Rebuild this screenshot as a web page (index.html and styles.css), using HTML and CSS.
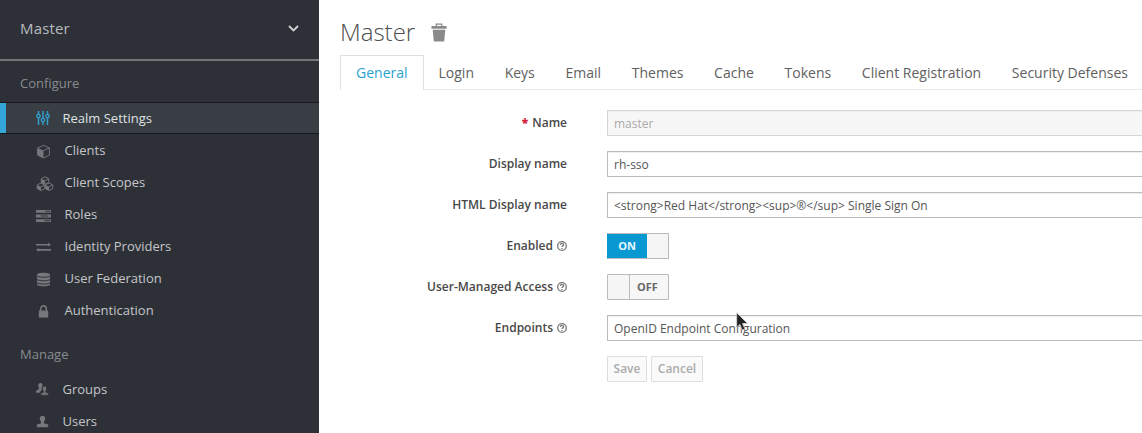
FILE: index.html
```html
<!DOCTYPE html>
<html lang="en">
<head>
<meta charset="utf-8">
<title>Master</title>
<link rel="stylesheet" href="styles.css">
</head>
<body>
<div class="app">
  <aside class="sidebar">
    <div class="realm"><span>Master</span>
      <svg class="chevron" width="11" height="7" viewBox="0 0 11 7"><path d="M1 1l4.5 4.4L10 1" fill="none" stroke="currentColor" stroke-width="1.8"/></svg>
    </div>
    <h2 class="section">Configure</h2>
    <nav class="menu">
      <a class="item active"><svg class="icon" viewBox="0 0 14 14"><path d="M2.500 0v3M2.500 7v7M7 0v7M7 11v3M11.500 0v3M11.500 7v7" stroke="currentColor" stroke-width="1.500"/><g fill="none" stroke="currentColor" stroke-width="1.300"><circle cx="2.500" cy="5" r="1.700"/><circle cx="7" cy="9" r="1.700"/><circle cx="11.500" cy="5" r="1.700"/></g></svg><span>Realm Settings</span></a>
      <a class="item inner"><svg class="icon" viewBox="0 0 16 16"><path d="M8 1.5l6.3 2.7v7.6L8 15l-6.3-3.2V4.2z" fill="none" stroke="currentColor"/><path d="M1.7 4.2L8 7v8l-6.3-3.2z" fill="currentColor"/><path d="M8 7l6.3-2.8" stroke="currentColor"/></svg><span>Clients</span></a>
      <a class="item inner"><svg class="icon wide" viewBox="0 0 18 16"><g stroke="currentColor" fill="none"><path d="M9 .8l4 2v4l-4 2-4-2v-4zM4.7 7.5l4 2v4l-4 2-4-2v-4zM13.3 7.5l4 2v4l-4 2-4-2v-4zM9 4.8l4-2M4.7 11.5l4-2M13.3 11.5l4-2"/></g><path d="M5 2.8l4 2v4l-4-2zM.7 9.5l4 2v4l-4-2zM9.3 9.5l4 2v4l-4-2z" fill="currentColor"/></svg><span>Client Scopes</span></a>
      <a class="item inner"><svg class="icon" viewBox="0 0 16 16"><path d="M0 2h16v3H0zM0 7h16v3H0zM0 12h16v3H0z" fill="currentColor"/><path d="M10 3.5h5M5 8.5h8M9 13.5h6" stroke="#2b2f36"/></svg><span>Roles</span></a>
      <a class="item inner"><svg class="icon" viewBox="0 0 16 16"><path d="M0 5h14M2 10.500h14" stroke="currentColor" stroke-width="1.700"/><path d="M13 3l3 2-3 2zM3 8.500l-3 2 3 2z" fill="currentColor"/></svg><span>Identity Providers</span></a>
      <a class="item inner"><svg class="icon" viewBox="0 0 16 16"><path d="M1 3c0-3 14-3 14 0v10c0 3-14 3-14 0z" fill="currentColor"/><path d="M1 4.2c2 1.8 12 1.8 14 0M1 8c2 1.8 12 1.8 14 0M1 11.5c2 1.8 12 1.8 14 0" fill="none" stroke="#2b2f36"/></svg><span>User Federation</span></a>
      <a class="item inner"><svg class="icon" viewBox="0 0 16 16"><path d="M3 7h10v7.500H3z" fill="currentColor"/><path d="M5 8V5a3 3 0 0 1 6 0v3" fill="none" stroke="currentColor" stroke-width="1.700"/></svg><span>Authentication</span></a>
    </nav>
    <h2 class="section manage">Manage</h2>
    <nav class="menu">
      <a class="item"><svg class="icon people" viewBox="0 0 16 16"><path d="M5.500 0c3 0 3 4 1.500 5.500v3C5.500 9.500 5 11 5 12H0V9.500l3.500-1.700V5.500C2 4 2.500 0 5.500 0z" fill="currentColor"/><path d="M10.500 4c3 0 2.800 4.500 1.300 6v1.300l3.700 1.400V15H6v-2.300l3.300-1.400V10C7.700 8.500 7.500 4 10.500 4z" fill="currentColor" stroke="#2b2f36" stroke-width=".7"/></svg><span>Groups</span></a>
      <a class="item"><svg class="icon people" viewBox="0 0 16 16"><path d="M8 1c4.200 0 3.700 5.500 1.800 7.300v1.800l5.200 1.700V15H1v-3.200l5.200-1.700V8.300C4.300 6.500 3.800 1 8 1z" fill="currentColor"/></svg><span>Users</span></a>
    </nav>
  </aside>
  <main class="content">
    <header class="heading"><h1>Master</h1>
      <svg class="trash" width="16" height="19" viewBox="0 0 17 20"><path d="M5.500 3V1.200h6V3" fill="none" stroke="currentColor" stroke-width="1.300"/><path d="M.5 3h16v3H.5zM1.800 7h13.400L14 19.500H3z" fill="currentColor"/></svg>
    </header>
    <ul class="tabs">
      <li class="tab current">General</li><li class="tab">Login</li><li class="tab">Keys</li><li class="tab">Email</li><li class="tab">Themes</li><li class="tab">Cache</li><li class="tab">Tokens</li><li class="tab">Client Registration</li><li class="tab">Security Defenses</li>
    </ul>
    <form class="form">
      <div class="row"><label class="label"><b class="required">*</b> Name</label><div class="field disabled">master</div></div>
      <div class="row"><label class="label">Display name</label><div class="field">rh-sso</div></div>
      <div class="row"><label class="label">HTML Display name</label><div class="field">&lt;strong&gt;Red Hat&lt;/strong&gt;&lt;sup&gt;®&lt;/sup&gt; Single Sign On</div></div>
      <div class="row"><label class="label">Enabled <svg class="help" viewBox="0 0 10 10"><circle cx="5" cy="5" r="4.300"/><path d="M3.400 3.900c0-2 3.200-1.800 3.200-.1 0 1.200-1.600 1-1.600 2.200M5 7v1"/></svg></label><div class="switch on"><span class="state">ON</span><span class="knob"></span></div></div>
      <div class="row"><label class="label">User-Managed Access <svg class="help" viewBox="0 0 10 10"><circle cx="5" cy="5" r="4.300"/><path d="M3.400 3.900c0-2 3.200-1.800 3.200-.1 0 1.200-1.600 1-1.600 2.200M5 7v1"/></svg></label><div class="switch off"><span class="knob"></span><span class="state">OFF</span></div></div>
      <div class="row"><label class="label">Endpoints <svg class="help" viewBox="0 0 10 10"><circle cx="5" cy="5" r="4.300"/><path d="M3.400 3.900c0-2 3.200-1.800 3.200-.1 0 1.200-1.600 1-1.600 2.200M5 7v1"/></svg></label><div class="field">OpenID Endpoint Configuration</div></div>
      <div class="actions"><button class="button save" type="button" disabled>Save</button><button class="button cancel" type="button" disabled>Cancel</button></div>
    </form>
  </main>
  <svg class="cursor" width="13" height="20" viewBox="0 0 13 20"><path d="M.7.8v14.500l3.200-2.800 2.300 5.500 2.700-1.100-2.400-5.400h5z" fill="#222" stroke="#ddd" stroke-width=".7"/></svg>
</div>
</body>
</html>
```
FILE: styles.css
```css
* { box-sizing: border-box; }
body { margin: 0; overflow: hidden; font-family: "Open Sans", "Noto Sans", sans-serif; font-size: 13px; color: #555; background: #fff; }
.app { display: flex; position: relative; width: 1142px; height: 433px; overflow: hidden; }
.sidebar { flex: 0 0 319px; background: #2d3037; color: #c3c5c8; }
.realm { display: flex; align-items: center; justify-content: space-between; height: 61px; padding: 0 20px 3px; border-bottom: 2px solid #737579; font-size: 15px; color: #b9bbbf; letter-spacing: .15px; }
.chevron { color: #d0d2d4; }
.section { margin: 0; height: 41px; padding: 0 20px; line-height: 45px; font-size: 13px; font-weight: 400; color: #888b90; }
.manage { height: 47px; line-height: 56px; }
.menu { display: flex; flex-direction: column; }
.item { display: flex; align-items: center; height: 32px; padding-left: 36px; color: #c4c6c9; }
.item span { margin-left: 12.500px; font-weight: 500; }
.inner span { margin-left: 13.500px; font-weight: 400; }
.active { border: solid #15191e; border-width: 1px 0; background: #393e44; box-shadow: inset 6px 0 #35a6d8; color: #dfe1e3; }
.icon { flex: none; width: 15px; height: 15px; color: #74777c; }
.inner .icon { margin-top: 2px; }
.active .icon { width: 14px; height: 14px; margin-bottom: 1px; color: #349fce; }
.wide { width: 18px; margin-right: -3px; }
.people { width: 13px; height: 13px; margin-right: 1px; }
.content { flex: 1; min-width: 0; padding-left: 21px; }
.heading { display: flex; align-items: center; height: 55px; padding-top: 10px; }
h1 { margin: 0; padding-bottom: 1px; font-size: 24px; line-height: 30px; font-weight: 300; color: #4d4d4d; }
.trash { margin-left: 16px; color: #8a8a8a; }
.tabs { display: flex; height: 35px; margin: 0; padding: 0; list-style: none; border-bottom: 1px solid #e8e8e8; white-space: nowrap; font-size: 14px; }
.tab { height: 35px; padding: 0 15.700px 0 15px; line-height: 35px; color: #606060; }
.current { border: 1px solid #e0e0e0; border-bottom: 0; background: #fff; color: #2aa3d0; line-height: 33px; padding: 0 15px; }
.form { padding-top: 20px; }
.row { display: flex; align-items: center; height: 26px; margin-bottom: 15px; white-space: nowrap; }
.label { display: flex; align-items: center; justify-content: flex-end; gap: 4px; width: 227px; margin-right: 40px; font-size: 12px; line-height: 16px; font-weight: 600; color: #484848; }
.required { color: #d21f3a; }
.help { width: 10px; height: 10px; fill: none; stroke: #777; stroke-width: 1.3; }
.field { flex: 1; height: 26px; padding-left: 6px; border: 1px solid #bbb; border-right: 0; border-radius: 1px 0 0 1px; font-size: 12px; line-height: 25px; color: #555; background: #fff; box-shadow: inset 0 1px 1px #eee; }
.disabled { background: #f7f7f7; border-color: #d5d5d5; color: #aaa; }
.switch { display: flex; width: 62px; height: 26px; border: 1px solid #bbb; border-radius: 1px; font-size: 11px; font-weight: 700; line-height: 24px; text-align: center; }
.state { flex: 1; }
.knob { width: 21px; background: #f5f5f5; }
.on { border-left-color: #0899d2; }
.on .state { background: #0899d2; color: #e8f7ff; padding-right: 1px; }
.off .state { background: #f7f7f7; border-left: 1px solid #bbb; color: #666; padding-right: 3px; }
.actions { display: flex; gap: 4px; padding-left: 267px; }
.button { height: 26px; padding: 0 0 2px; border: 1px solid #ddd; border-radius: 1px; background: #fafafa; font: 600 12px "Open Sans", "Noto Sans", sans-serif; color: #aaa; }
.save { width: 40px; }
.cancel { width: 52px; }
.cursor { position: absolute; left: 736px; top: 312px; }
```
